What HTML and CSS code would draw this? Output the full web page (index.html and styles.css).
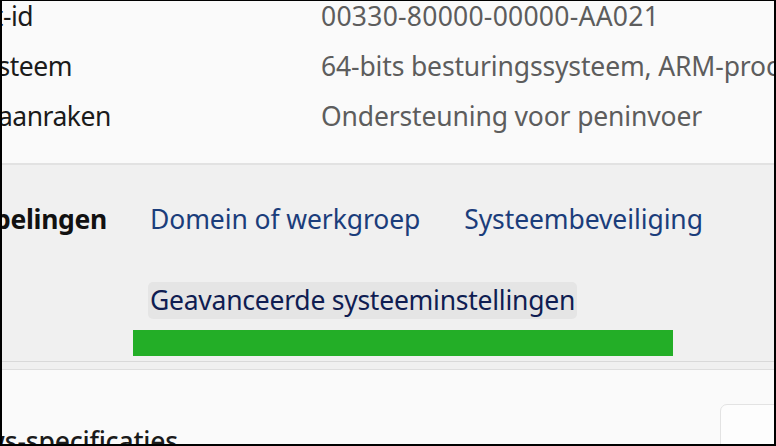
FILE: index.html
```html
<!DOCTYPE html>
<html lang="nl">
<head>
<meta charset="utf-8">
<title>Systeem - Info</title>
<link rel="stylesheet" href="styles.css">
</head>
<body>
<div class="frame">
  <section class="specs">
    <div class="spec-row"><span class="spec-label">Product-id</span><span class="spec-value">00330-80000-00000-AA021</span></div>
    <div class="spec-row"><span class="spec-label">Type systeem</span><span class="spec-value">64-bits besturingssysteem, ARM-processor</span></div>
    <div class="spec-row"><span class="spec-label">Pen en aanraken</span><span class="spec-value">Ondersteuning voor peninvoer</span></div>
  </section>

  <section class="related">
    <div class="related-title"><span>Gerelateerde koppelingen</span></div>
    <div class="related-links">
      <div class="link-row">
        <a class="link" href="#">Domein of werkgroep</a>
        <a class="link" href="#">Systeembeveiliging</a>
      </div>
      <a class="link link-advanced" href="#">Geavanceerde systeeminstellingen</a>
      <div class="marker"></div>
    </div>
  </section>

  <section class="card">
    <div class="card-title"><span>Windows-specificaties</span></div>
    <button class="copy-btn" type="button"></button>
  </section>
</div>
</body>
</html>
```

FILE: styles.css
```css
* { box-sizing: border-box; }

html, body {
  margin: 0;
  padding: 0;
  background: #000;
}

.frame {
  width: 776px;
  height: 446px;
  overflow: hidden;
  border-style: solid;
  border-color: #000;
  border-width: 1px 2px 2px 2px;
  background: #f0f0f0;
  font-family: "Noto Sans", "Open Sans", sans-serif;
  font-size: 26.5px;
  color: #1b1b1b;
}

/* ---- spec rows ---- */
.specs {
  background: #fafafa;
  margin-top: -10px;
  padding-bottom: 22px;
  border-bottom: 2px solid #e2e2e2;
}

.spec-row {
  display: grid;
  grid-template-columns: 412px 1fr;
  margin-left: -93px;
  height: 50px;
  line-height: 50px;
  white-space: nowrap;
}

.spec-label {
  color: #1b1b1b;
  letter-spacing: -0.5px;
}

.spec-value {
  color: #5d5d5d;
  letter-spacing: -0.15px;
}

.spec-row:first-child .spec-value { letter-spacing: 0.25px; }

/* ---- related links ---- */
.related {
  display: grid;
  grid-template-columns: 148px 1fr;
  padding-top: 34px;
  padding-bottom: 5px;
  border-bottom: 1px solid #d9d9d9;
  background: #f0f0f0;
}

.related-title {
  display: flex;
  justify-content: flex-end;
  overflow: hidden;
  width: 105px;
  height: 40px;
  line-height: 40px;
  white-space: nowrap;
  font-weight: 700;
  letter-spacing: -0.3px;
  color: #111;
}

.related-links {
  display: flex;
  flex-direction: column;
  align-items: flex-start;
}

.link-row {
  display: flex;
  gap: 44px;
  height: 40px;
  line-height: 40px;
  white-space: nowrap;
}

.link {
  color: #1b3d7b;
  text-decoration: none;
  letter-spacing: -0.1px;
}

.link-advanced {
  margin-top: 43px;
  margin-left: -2px;
  padding: 0 2px;
  height: 37px;
  line-height: 37px;
  white-space: nowrap;
  letter-spacing: -0.25px;
  color: #0f1d52;
  background: #e5e5e5;
  border-radius: 5px;
}

.marker {
  margin-top: 11px;
  margin-left: -17px;
  width: 540px;
  height: 26px;
  background: #23ae27;
}

/* ---- windows specs card ---- */
.card {
  margin-top: 7px;
  border-top: 1px solid #dedede;
  background: #fafafa;
  height: 120px;
  display: flex;
  justify-content: space-between;
  align-items: flex-start;
}

.card-title {
  display: flex;
  justify-content: flex-end;
  overflow: hidden;
  width: 176px;
  margin-top: 51px;
  height: 40px;
  line-height: 40px;
  white-space: nowrap;
  font-weight: 500;
  letter-spacing: -0.2px;
  color: #1b1b1b;
}

.copy-btn {
  margin-top: 34px;
  margin-right: -60px;
  width: 114px;
  height: 60px;
  border: 1px solid #e3e3e3;
  border-radius: 7px;
  background: #fdfdfd;
}
```
